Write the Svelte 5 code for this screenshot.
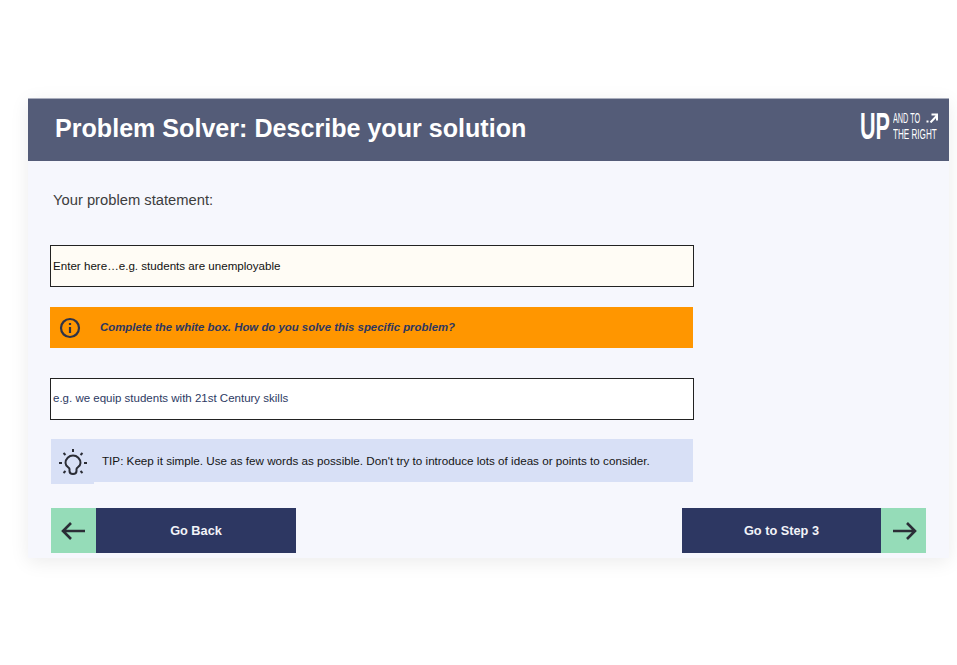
<script>
	const statement = 'Enter here…e.g. students are unemployable';
	const solution = 'e.g. we equip students with 21st Century skills';
</script>

<div class="page">
	<div class="card">
		<header class="header">
			<h1>Problem Solver: Describe your solution</h1>
			<div class="logo">
				<span class="up">UP</span>
				<div class="logo-words">
					<div class="logo-line">
						<span class="small and">AND TO</span>
						<svg width="12" height="10" viewBox="0 0 12 10" fill="none" stroke="#fff" stroke-width="2">
							<path d="M0.500 8.500h2" />
							<path d="M4.500 9.500 11 2.500M5.500 1.500H11V7.500" />
						</svg>
					</div>
					<span class="small right">THE RIGHT</span>
				</div>
			</div>
		</header>

		<div class="body">
			<p class="intro">Your problem statement:</p>

			<div class="field statement">{statement}</div>

			<div class="notice">
				<svg width="22" height="22" viewBox="0 0 22 22" fill="none" stroke="#2f3347" stroke-width="2.2">
					<circle cx="11" cy="11" r="9" />
					<path d="M11 10v6" />
					<path d="M11 6v2" />
				</svg>
				<em>Complete the white box. How do you solve this specific problem?</em>
			</div>

			<div class="field solution">{solution}</div>

			<div class="tip">
				<div class="tip-icon">
					<svg width="32" height="32" viewBox="0 0 32 32" fill="none" stroke="#2b2d36" stroke-width="2">
						<path d="M12.500 25v-2c0-1.500-4-2.500-4-6a7.500 7.500 0 0 1 15 0c0 3.500-4 4.500-4 6v2q0 3-3.500 3t-3.500-3Z" />
						<path d="M16 3v3M2 17h3M27 17h3M6.500 7l2 2M25.500 7l-2 2M6.500 27l2-2M25.500 27l-2-2" />
					</svg>
				</div>
				<p>TIP: Keep it simple. Use as few words as possible. Don't try to introduce lots of ideas or points to consider.</p>
			</div>

			<nav class="actions">
				<button class="nav-btn">
					<span class="arrow">
						<svg width="26" height="22" viewBox="0 0 26 22" fill="none" stroke="#2b2d36" stroke-width="2.600">
							<path d="M24 11H2M10 3l-8 8 8 8" />
						</svg>
					</span>
					<span class="label">Go Back</span>
				</button>
				<button class="nav-btn next">
					<span class="label">Go to Step 3</span>
					<span class="arrow">
						<svg width="26" height="22" viewBox="0 0 26 22" fill="none" stroke="#2b2d36" stroke-width="2.600">
							<path d="M2 11h22M16 3l8 8-8 8" />
						</svg>
					</span>
				</button>
			</nav>
		</div>
	</div>
</div>

<style>
	:global(body) {
		background: #fff;
		font-family: 'Liberation Sans', Arial, sans-serif;
	}
	.page {
		height: 665px;
		box-sizing: border-box;
		padding: 98px 8px 0 28px;
		overflow: hidden;
	}
	.card {
		height: 460px;
		background: #f6f7fd;
		box-shadow: 0 4px 18px rgba(0, 0, 0, 0.08);
	}
	.header {
		height: 63px;
		background: #545c78;
		border-top: 1px solid #a9adbc;
		box-sizing: border-box;
		display: flex;
		align-items: center;
		justify-content: space-between;
		padding: 0 11px 4px 27px;
	}
	h1 {
		margin: 0;
		font-size: 25.100px;
		font-weight: 700;
		color: #fff;
	}
	.logo {
		display: flex;
		align-items: center;
		gap: 4px;
		margin-bottom: 4px;
		color: #fff;
	}
	.up {
		font-size: 36px;
		line-height: 27px;
		font-weight: 700;
		width: 29px;
		display: inline-block;
		transform: scaleX(0.6);
		transform-origin: left;
	}
	.logo-words {
		display: flex;
		flex-direction: column;
		gap: 4px;
		width: 45px;
	}
	.logo-line {
		display: flex;
		align-items: center;
		justify-content: space-between;
		height: 12px;
	}
	.small {
		font-size: 14px;
		line-height: 12px;
		white-space: nowrap;
		display: inline-block;
		transform-origin: left;
	}
	.and {
		width: 27px;
		transform: scaleX(0.52);
	}
	.right {
		width: 45px;
		transform: scaleX(0.58);
	}
	.body {
		padding: 29px 23px 0 22px;
	}
	.intro {
		margin: 0 0 0 3px;
		height: 55px;
		font-size: 14.750px;
		line-height: 20px;
		color: #3d3d3d;
	}
	.field {
		width: 644px;
		height: 42px;
		box-sizing: border-box;
		border: 1px solid #222;
		display: flex;
		align-items: center;
		padding: 0 0 2px 2px;
		font-size: 11.600px;
	}
	.statement {
		background: #fffcf5;
		color: #111;
	}
	.solution {
		background: #fff;
		color: #2d3a63;
		margin-top: 30px;
		font-size: 11.500px;
	}
	.notice {
		width: 643px;
		height: 41px;
		margin-top: 20px;
		background: #ff9600;
		display: flex;
		align-items: center;
		gap: 19px;
		padding-left: 9px;
		box-sizing: border-box;
	}
	.notice em {
		font-size: 11.400px;
		font-weight: 700;
		color: #2d3660;
		margin-bottom: 1px;
	}
	.tip {
		width: 642px;
		height: 43px;
		margin: 19px 0 0 1px;
		background: #d8e0f6;
		display: flex;
		align-items: flex-start;
	}
	.tip-icon {
		width: 43px;
		height: 45px;
		background: #d8e0f6;
		display: flex;
		align-items: center;
		justify-content: center;
	}
	.tip p {
		margin: 0 0 0 8px;
		font-size: 11.660px;
		line-height: 43px;
		color: #151515;
	}
	.actions {
		display: flex;
		justify-content: space-between;
		margin: 26px 0 0 1px;
	}
	.nav-btn {
		display: flex;
		padding: 0;
		border: 0;
		height: 45px;
		width: 245px;
		background: none;
		font-family: inherit;
	}
	.next {
		width: 244px;
	}
	.arrow {
		width: 45px;
		height: 45px;
		background: #95dcb8;
		display: flex;
		align-items: center;
		justify-content: center;
	}
	.label {
		flex: 1;
		background: #2d3762;
		color: #f2f3f8;
		font-size: 12.750px;
		font-weight: 700;
		padding-top: 1px;
		line-height: 44px;
		height: 45px;
		box-sizing: border-box;
		text-align: center;
	}
</style>
